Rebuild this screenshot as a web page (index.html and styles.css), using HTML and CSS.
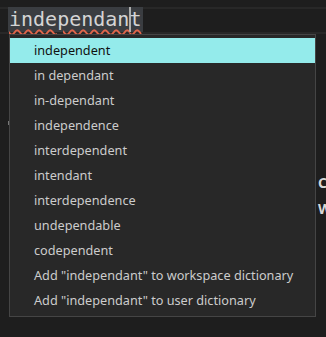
FILE: index.html
```html
<!DOCTYPE html>
<html lang="en">
<head>
    <meta charset="UTF-8">
    <title>Spelling suggestions</title>
    <link rel="stylesheet" href="styles.css">
</head>
<body>
    <div class="editor">
        <div class="line current">
            <span class="word">independan<span class="cursor"></span>t</span>
        </div>
        <div class="behind">
            <div class="tick"></div>
            <div class="side-text">
                <p>Co</p>
                <p>Wo</p>
            </div>
        </div>

        <ul class="suggest">
            <li class="selected">independent</li>
            <li>in dependant</li>
            <li>in-dependant</li>
            <li>independence</li>
            <li>interdependent</li>
            <li>intendant</li>
            <li>interdependence</li>
            <li>undependable</li>
            <li>codependent</li>
            <li>Add "independant" to workspace dictionary</li>
            <li>Add "independant" to user dictionary</li>
        </ul>
    </div>
</body>
</html>
```

FILE: styles.css
```css
html, body { margin: 0; padding: 0; }
body {
    background-color: #1e1e1e;
    width: 326px;
    height: 337px;
    overflow: hidden;
}
.editor { position: relative; height: 337px; padding-top: 7px; box-sizing: border-box; }

.line.current {
    height: 23px;
    border-top: 2px solid #282828;
    border-bottom: 2px solid #282828;
    position: relative;
}
.word {
    position: absolute;
    left: 8px;
    top: -2px;
    height: 25px;
    padding: 0 2px 0 1px;
    background-color: #3a3d41;
    font-family: "DejaVu Sans Mono", monospace;
    font-size: 20px;
    line-height: 25px;
    color: #d4d4d4;
    text-decoration: underline wavy #e0654a;
    text-decoration-thickness: 1.5px;
    text-underline-offset: 3px;
}
.cursor {
    display: inline-block;
    width: 2px;
    height: 25px;
    margin-right: -2px;
    vertical-align: top;
    background-color: #aeafad;
}

.behind { position: relative; height: 300px; }
.tick {
    position: absolute;
    left: 8px;
    top: 87px;
    width: 1px;
    height: 4px;
    background: #777;
}
.side-text {
    padding: 136px 0 0 318px;
    font-family: "Noto Sans", sans-serif;
    font-size: 14px;
    font-weight: bold;
    color: #d8d8d8;
}
.side-text p { margin: 0; line-height: 26px; }

.suggest {
    position: absolute;
    left: 9px;
    top: 34px;
    width: 305px;
    margin: 0;
    padding: 3px 0;
    list-style: none;
    background-color: #282828;
    border: 1px solid #454545;
    font-family: "Noto Sans", sans-serif;
    font-size: 12.7px;
    color: #cccccc;
}
.suggest li {
    height: 25px;
    line-height: 25px;
    padding-left: 24px;
    white-space: nowrap;
}
.suggest li.selected {
    background-color: #94ebeb;
    color: #111;
}
```
